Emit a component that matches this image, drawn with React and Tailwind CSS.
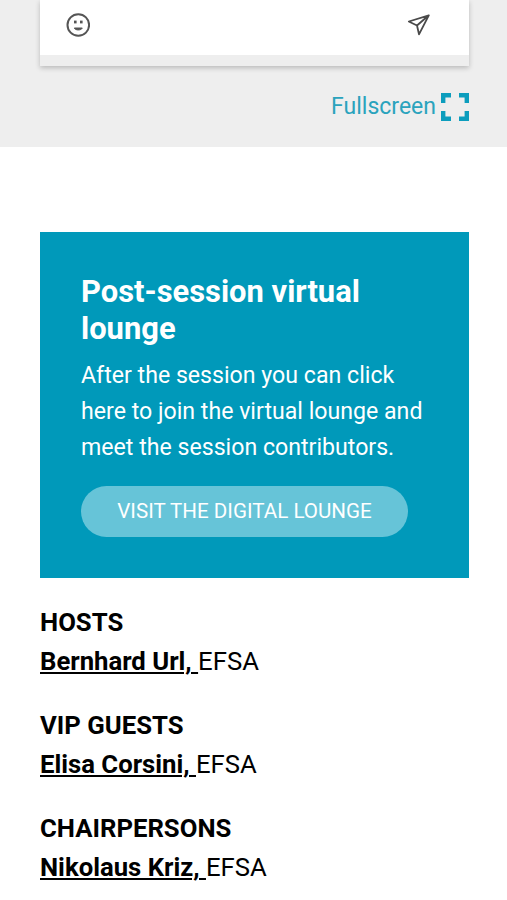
import React from "react";

const people = [
  { role: "HOSTS", name: "Bernhard Url, ", org: "EFSA" },
  { role: "VIP GUESTS", name: "Elisa Corsini, ", org: "EFSA" },
  { role: "CHAIRPERSONS", name: "Nikolaus Kriz, ", org: "EFSA" },
];

const SmileIcon = () => (
  <svg width="24" height="24" viewBox="0 0 24 24" fill="none" stroke="#555" strokeWidth="2">
    <circle cx="12.3" cy="12" r="10.8" />
    <path d="M8.3 15c1 2.6 7 2.6 8 0z" fill="#555" strokeWidth="1" strokeLinejoin="round" />
    <rect x="8" y="7.6" width="2.6" height="2.8" fill="#555" stroke="none" />
    <rect x="14" y="7.6" width="2.6" height="2.8" fill="#555" stroke="none" />
  </svg>
);

const SendIcon = () => (
  <svg width="24" height="24" viewBox="0 0 24 24" fill="none" stroke="#4a4a4a" strokeWidth="1.8" strokeLinejoin="round">
    <path d="M21.8 2.3L1.8 8.5l8.2 4L21.8 2.3zM21.8 2.3L10 12.5l2 8.8z" />
  </svg>
);

const FullscreenIcon = () => (
  <svg width="28" height="28" viewBox="0 0 28 28" fill="none" stroke="#0c9dbd" strokeWidth="4.4">
    <path d="M10 2.2H2.2V10M18 2.2h7.8V10M25.8 18v7.8H18M10 25.8H2.2V18" />
  </svg>
);

const App = () => {
  return (
    <div className="h-[900px] overflow-hidden bg-white font-[Roboto,sans-serif] text-black">
      {/* Chat widget footer */}
      <section className="h-[147px] bg-[#eeeeee] pl-10 pr-[38px]">
        <div className="h-[66px] border-b-11 border-[#eeeeee] bg-white shadow-[0_2px_5px_rgba(0,0,0,0.22)]">
          <div className="flex items-start justify-between pl-[26px] pr-[38px] pt-[13px]">
            <SmileIcon />
            <SendIcon />
          </div>
        </div>
        <div className="mt-[27px] flex items-center justify-end gap-[5px] text-[#2aa3bd]">
          <span className="text-[23px] leading-7">Fullscreen</span>
          <FullscreenIcon />
        </div>
      </section>

      {/* Lounge card */}
      <section className="ml-10 mr-[38px] mt-[85px] h-[346px] bg-[#0099ba] px-[41px] pt-[41px] text-white">
        <h2 className="text-[30.9px] font-bold leading-[37px]">
          Post-session virtual
          <br />
          lounge
        </h2>
        <p className="mt-[11px] text-[23.15px] leading-9">
          After the session you can click
          <br />
          here to join the virtual lounge and
          <br />
          meet the session contributors.
        </p>
        <button className="mt-5 h-[51px] w-[327px] rounded-full bg-[#66c4d8] text-[20.6px]">
          VISIT THE DIGITAL LOUNGE
        </button>
      </section>

      {/* Contributors */}
      <section className="flex flex-col gap-[25px] pl-10 pt-[25px] text-[25.7px] leading-[39px]">
        {people.map((person) => (
          <div key={person.role}>
            <h3 className="font-bold">{person.role}</h3>
            <p>
              <a className="font-bold underline decoration-2 underline-offset-2">{person.name}</a>
              {person.org}
            </p>
          </div>
        ))}
      </section>
    </div>
  );
};

export default App;
